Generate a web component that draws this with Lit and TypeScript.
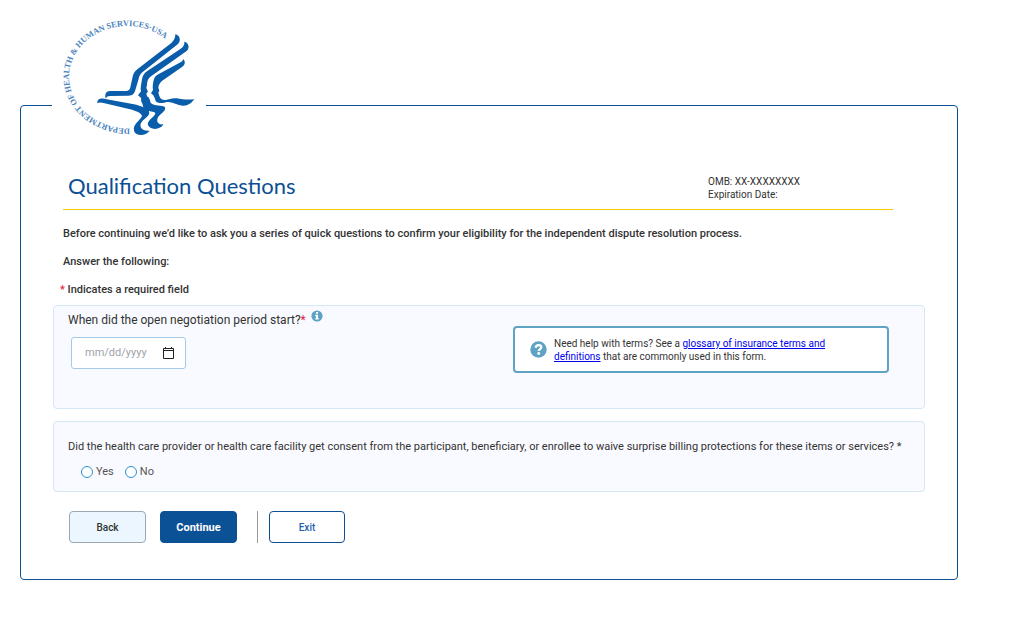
import { LitElement, html, css, svg } from "lit";
import { customElement } from "lit/decorators.js";

@customElement("hhs-logo")
export class HhsLogo extends LitElement {
  static styles = css`
    :host { display: block; }
    .mark { display: block; width: 154px; height: 135px; }
    .ring { font-family: "Liberation Serif", serif; font-size: 25px; font-weight: 700; fill: #4a83bd; }
    .bird { fill: #0a5dab; }
  `;
  render() {
    return html`<svg class="mark" viewBox="6 0 462 405" role="img" aria-label="Department of Health and Human Services USA">
      <defs><path id="arc" d="M240 356 A183 155 0 0 1 57 201 A175 153 0 0 1 232 48 A170 152 0 0 1 390 144" /></defs>
      <text class="ring"><textPath href="#arc">DEPARTMENT OF HEALTH &amp; HUMAN SERVICES·USA</textPath></text>
      ${svg`<g class="bird">
        <path d="M376 73C390 76 394 92 384 102L277 187C269 194 267 200 265 210L256 240C253 252 247 257 236 257L180 258C173 258 170 260 167 266C164 252 168 243 180 243L228 243C236 243 239 240 241 232L247 205C249 191 254 184 263 177L364 99C372 92 376 84 376 73Z"/>
        <path d="M403 95C416 98 420 112 411 122L303 199C294 206 291 214 291 225L289 234L294 245L289 250L291 259C298 262 300 271 302 278C312 290 338 284 345 291C349 301 334 310 326 319C317 331 322 346 340 343C334 358 303 363 294 346C290 330 314 322 316 310C313 302 296 307 284 299C278 294 280 285 276 278C270 272 277 268 271 262L264 256L273 244C270 235 274 223 276 208C278 196 283 189 292 183L391 117C400 111 404 104 403 95Z"/>
        <path d="M400 147C408 156 404 166 396 171L341 209C332 215 326 222 325 233L328 242L325 248L328 258C331 267 337 271 347 270C358 268 366 263 380 265C396 268 412 270 433 268C424 280 414 288 398 287C382 285 366 274 350 276C342 278 337 280 329 279C320 278 315 273 315 266L310 256L303 250L309 240C307 230 309 220 311 211C313 202 318 197 325 193L386 160C394 156 399 153 400 147Z"/>
        <path d="M142 280C141 269 148 264 162 266L252 283C270 287 290 295 297 304C302 317 284 324 275 336C266 349 274 364 299 362C288 378 258 381 252 362C248 343 269 333 276 319C276 310 256 302 240 298L164 280C154 277 147 276 142 280Z"/>
      </g>`}
    </svg>`;
  }
}

@customElement("app-root")
export class AppRoot extends LitElement {
  static styles = css`
    :host { display: block; font-family: Roboto, "Liberation Sans", sans-serif; font-size: 11px; line-height: 14px; color: #333; }
    * { box-sizing: border-box; }
    .page { padding: 105px 54px 40px 20px; }
    .frame { border: 1px solid #0b4f94; border-radius: 4px; padding: 0 32px 36px; }
    .logo { display: block; width: 154px; margin: -96px 0 0 -1px; background: #fff; }
    .head { display: flex; justify-content: space-between; align-items: flex-end; margin: 26px 32px 0 10px; padding: 0 93px 8px 5px; border-bottom: 1px solid #f0cb00; }
    h1 { margin: 0; padding-bottom: 1px; font: 400 22px/29px Lato, sans-serif; color: #0b4f94; }
    .omb { font-size: 10px; line-height: 13px; }
    .intro { margin: 17px 10px 0; font-weight: 500; }
    .intro p { margin: 0 0 14px; }
    .intro .note { margin: 0 0 8px -3px; }
    .req { color: #e0243c; }
    .card { background: #f9faff; border: 1px solid #d5e7f5; border-radius: 4px; padding: 7px 14px; }
    .period { display: flex; justify-content: space-between; align-items: flex-start; min-height: 104px; padding-right: 35px; }
    .label { display: flex; gap: 5px; font-size: 12px; }
    .info { width: 12px; height: 12px; margin-top: -3px; }
    .date { display: flex; align-items: center; width: 115px; height: 32px; margin: 10px 0 0 3px; padding: 0 10px 0 13px; border: 1px solid #a5c9e8; border-radius: 3px; background: #fff; }
    .date input { flex: 1; min-width: 0; padding: 0; border: 0; outline: 0; background: none; font: 400 11px/14px Roboto, sans-serif; }
    .date input::placeholder { color: #a0a3a8; opacity: 1; }
    .cal { width: 13px; height: 14px; }
    .help { display: flex; align-items: center; gap: 7px; width: 376px; margin-top: 13px; padding: 9px 40px 8px 15px; border: 2px solid #5ea3c4; border-radius: 4px; background: #fff; font-size: 10px; line-height: 13px; }
    .help svg { flex: none; width: 17px; height: 17px; margin-bottom: 2px; }
    .help a { color: #00e; }
    .consent { margin: 12px 0 0; padding-top: 18px; padding-bottom: 12px; }
    fieldset { border: 0; margin: 0; padding: 0; min-width: 0; }
    legend { padding: 0; }
    .choices { display: flex; gap: 11px; margin: 11px 0 0 13px; color: #555; }
    .choices label { display: flex; align-items: center; gap: 3px; }
    .choices input { appearance: none; width: 12px; height: 12px; margin: 0; border: 1px solid #2f8fd0; border-radius: 50%; background: #fff; }
    .choices input:checked { background: #2f8fd0; }
    .actions { display: flex; margin: 19px 0 0 16px; }
    button { width: 77px; height: 32px; padding: 2px 0 0; border: 1px solid #0b4f94; border-radius: 4px; background: #fff; color: #1c63b0; font: 500 10px/14px Roboto, sans-serif; }
    .back { background: #ebf6fe; border-color: #9aa8b3; color: #333; }
    .next { margin-left: 14px; background: #0b5196; color: #fff; font-size: 11px; font-weight: 700; }
    .exit { width: 76px; }
    .sep { width: 1px; margin: 0 11px 0 20px; background: #999; }
  `;
  render() {
    return html`<main class="page"><div class="frame">
      <hhs-logo class="logo"></hhs-logo>
      <header class="head">
        <h1>Qualification Questions</h1>
        <div class="omb">OMB: XX-XXXXXXXX<br />Expiration Date:</div>
      </header>
      <div class="intro">
        <p>Before continuing we’d like to ask you a series of quick questions to confirm your eligibility for the independent dispute resolution process.</p>
        <p>Answer the following:</p>
        <p class="note"><span class="req">*</span> Indicates a required field</p>
      </div>
      <section class="card period">
        <div>
          <div class="label">
            <label for="start">When did the open negotiation period start?<span class="req">*</span></label>
            <svg class="info" viewBox="0 0 12 12" aria-hidden="true"><circle cx="6" cy="6" r="5.6" fill="#5ea3c4" /><path d="M5 2h2v1.7H5zM4.2 4.7H7v3.6h.8v1.2H4.2V8.3H5V5.9h-.8z" fill="#fff" /></svg>
          </div>
          <div class="date">
            <input id="start" type="text" placeholder="mm/dd/yyyy" />
            <svg class="cal" viewBox="0 0 13 14" fill="none" stroke="#222" aria-hidden="true"><path d="M1.5 2.5h10v10h-10zM1 4.5h11M3.5 1v2M9.5 1v2" /></svg>
          </div>
        </div>
        <aside class="help">
          <svg viewBox="0 0 17 17" aria-hidden="true"><circle cx="8.5" cy="8.5" r="8.2" fill="#5ea3c4" /><path d="M5.6 6.7C5.9 4.8 7 4.1 8.5 4.1c1.6 0 2.8.8 2.8 2.2 0 1.8-2.500 1.800-2.500 3.700" fill="none" stroke="#fff" stroke-width="2.3" /><circle cx="8.7" cy="12.5" r="1.4" fill="#fff" /></svg>
          <span>Need help with terms? See a <a href="#glossary">glossary of insurance terms and definitions</a> that are commonly used in this form.</span>
        </aside>
      </section>
      <section class="card consent">
        <fieldset>
          <legend>Did the health care provider or health care facility get consent from the participant, beneficiary, or enrollee to waive surprise billing protections for these items or services? *</legend>
          <div class="choices">
            <label><input type="radio" name="consent" value="yes" />Yes</label>
            <label><input type="radio" name="consent" value="no" />No</label>
          </div>
        </fieldset>
      </section>
      <div class="actions">
        <button class="back" type="button">Back</button>
        <button class="next" type="button">Continue</button>
        <span class="sep"></span>
        <button class="exit" type="button">Exit</button>
      </div>
    </div></main>`;
  }
}
